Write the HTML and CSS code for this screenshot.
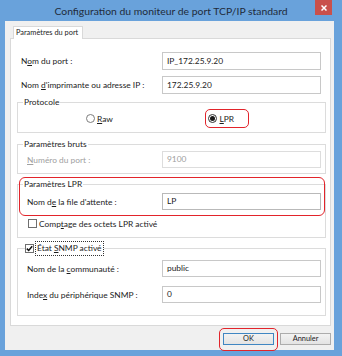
FILE: index.html
```html
<!DOCTYPE html>
<html lang="fr">
<head>
    <meta charset="UTF-8">
    <meta name="viewport" content="width=device-width, initial-scale=1.0">
    <title>Configuration du moniteur de port TCP/IP standard</title>
    <link rel="stylesheet" href="styles.css">
</head>
<body>
    <div class="fenetre">
        <div class="barre-titre">
            <span class="titre">Configuration du moniteur de port TCP/IP standard</span>
            <span class="fermer">
                <svg width="6" height="6" viewBox="0 0 6 6"><path d="M0.5 0.5 L5.5 5.5 M5.5 0.5 L0.5 5.5" stroke="#fff" stroke-width="1.5"/></svg>
            </span>
        </div>
        <div class="dialogue">
            <div class="onglets">
                <div class="onglet">Paramètres du port</div>
            </div>
            <div class="panneau">
                <div class="ligne haut premiere">
                    <span>N<u>o</u>m du port :</span>
                    <div class="champ grand">IP_172.25.9.20</div>
                </div>
                <div class="ligne haut">
                    <span>Nom <u>d</u>'imprimante ou adresse IP :</span>
                    <div class="champ grand">172.25.9.20</div>
                </div>

                <fieldset class="groupe protocole">
                    <legend>Protocole</legend>
                    <div class="radios">
                        <div class="choix">
                            <span class="radio"></span>
                            <span><u>R</u>aw</span>
                        </div>
                        <div class="choix marque">
                            <span class="radio coche"></span>
                            <span><u>L</u>PR</span>
                        </div>
                    </div>
                </fieldset>

                <fieldset class="groupe bruts">
                    <legend>Paramètres bruts</legend>
                    <div class="ligne inactif">
                        <span><u>N</u>uméro du port :</span>
                        <div class="champ">9100</div>
                    </div>
                </fieldset>

                <div class="bloc-lpr">
                    <fieldset class="groupe lpr">
                        <legend>Paramètres LPR</legend>
                        <div class="ligne file">
                            <span>Nom d<u>e</u> la file d'attente :</span>
                            <div class="champ fonce">LP</div>
                        </div>
                        <div class="case-ligne">
                            <span class="case"></span>
                            <span>Comp<u>t</u>age des octets LPR activé</span>
                        </div>
                    </fieldset>
                    <div class="surlignage"></div>
                </div>

                <fieldset class="groupe snmp">
                    <legend>
                        <span class="case cochee">
                            <svg width="7" height="7" viewBox="0 0 7 7"><path d="M0.8 3.6 L2.7 5.5 L6.2 1.2" fill="none" stroke="#111" stroke-width="1.5"/></svg>
                        </span>
                        <span class="focus">État <u>S</u>NMP activé</span>
                    </legend>
                    <div class="ligne communaute">
                        <span>Nom de la <u>c</u>ommunauté :</span>
                        <div class="champ">public</div>
                    </div>
                    <div class="ligne index">
                        <span>Inde<u>x</u> du périphérique SNMP :</span>
                        <div class="champ">0</div>
                    </div>
                </fieldset>
            </div>
            <div class="boutons">
                <div class="bouton-ok">
                    <button class="bouton defaut">OK</button>
                </div>
                <button class="bouton">Annuler</button>
            </div>
        </div>
    </div>
</body>
</html>
```
FILE: styles.css
```css
* {
    margin: 0;
    padding: 0;
    box-sizing: border-box;
}
body {
    width: 342px;
    height: 356px;
    font-family: Lato, "Noto Sans", sans-serif;
    font-size: 8.4px;
    color: #1c1c1c;
    overflow: hidden;
}
u {
    text-underline-offset: 1px;
}
.fenetre {
    width: 342px;
    height: 356px;
    background-color: #69a2db;
    display: flex;
    flex-direction: column;
    padding: 0 8px 6px 5px;
}
.barre-titre {
    position: relative;
    height: 21px;
    margin: 0 -8px 0 -5px;
    display: flex;
    align-items: center;
    justify-content: center;
    font-size: 10.4px;
    color: #1f2b3a;
}
.fermer {
    position: absolute;
    top: 0;
    right: 10px;
    width: 17px;
    height: 15px;
    background-color: #c9504b;
    display: flex;
    align-items: center;
    justify-content: center;
}
.dialogue {
    flex: 1;
    background-color: #f0f0f0;
    padding: 5px 3px 0 5px;
    display: flex;
    flex-direction: column;
}
.onglets {
    display: flex;
    height: 12px;
    padding-left: 3px;
}
.onglet {
    position: relative;
    z-index: 1;
    width: 70px;
    height: 13px;
    background-color: #fff;
    border: 1px solid #d9d9d9;
    border-bottom: none;
    font-size: 7.4px;
    line-height: 11px;
    padding-left: 2px;
}
.panneau {
    height: 288px;
    background-color: #fff;
    border: 1px solid #d9d9d9;
    padding: 0 4px 0 6px;
    display: flex;
    flex-direction: column;
}
.ligne {
    display: grid;
    grid-template-columns: 1fr 159px;
    align-items: center;
}
.ligne.haut {
    padding: 0 5px 0 4px;
    margin-top: 6px;
}
.ligne.haut.premiere {
    margin-top: 13px;
}
.champ {
    height: 17px;
    border: 1px solid #c8c8c8;
    background-color: #fff;
    padding-left: 4px;
    line-height: 15px;
}
.champ.grand {
    height: 18px;
    line-height: 16px;
}
.champ.fonce {
    border-color: #b9b9b9;
}
.inactif {
    color: #a0a0a0;
}
.inactif .champ {
    border-color: #dddddd;
}
.groupe {
    min-width: 0;
    border: 1px solid #dcdcdc;
    padding: 0 4px 0 9px;
}
.groupe legend {
    line-height: 12px;
    padding: 0 1px;
    margin-left: -4px;
}
.protocole {
    margin-top: 2px;
    padding-bottom: 4px;
}
.radios {
    display: grid;
    grid-template-columns: 119px 44px;
    height: 19px;
    margin-top: 1px;
    padding-left: 59px;
}
.choix {
    display: flex;
    align-items: center;
    gap: 2px;
}
.choix.marque {
    border: 1.5px solid #e2242b;
    border-radius: 5px;
    padding-left: 1.5px;
    gap: 3px;
}
.radio {
    width: 9px;
    height: 9px;
    border: 1px solid #7d7d7d;
    border-radius: 50%;
    background-color: #fff;
    display: flex;
    align-items: center;
    justify-content: center;
}
.radio.coche {
    border-color: #333;
}
.radio.coche::after {
    content: "";
    width: 5px;
    height: 5px;
    border-radius: 50%;
    background-color: #1a1a1a;
}
.bruts {
    margin-top: 5px;
    padding-bottom: 5px;
}
.bruts .ligne {
    margin-top: 1px;
}
.bloc-lpr {
    position: relative;
    margin-top: 4px;
}
.lpr {
    padding-bottom: 6px;
}
.ligne.file {
    margin-top: 3px;
}
.case-ligne {
    display: flex;
    align-items: center;
    gap: 2px;
    height: 15px;
    margin-top: 6px;
    padding-left: 1px;
}
.case {
    width: 9px;
    height: 9px;
    border: 1px solid #6f6f6f;
    background-color: #fff;
    display: flex;
    align-items: center;
    justify-content: center;
}
.surlignage {
    position: absolute;
    top: -1px;
    left: 2px;
    width: 306px;
    height: 39px;
    border: 1.5px solid #e2242b;
    border-radius: 6px;
    pointer-events: none;
}
.snmp {
    margin-top: 3px;
    padding-bottom: 12px;
}
.snmp legend {
    display: flex;
    align-items: center;
    gap: 1px;
    line-height: 13px;
    padding: 0;
    margin-left: -2px;
}
.focus {
    border: 1px dotted #333;
    padding: 0 1px;
}
.ligne.communaute {
    margin-top: 4px;
}
.ligne.index {
    margin-top: 9px;
}
.boutons {
    display: flex;
    justify-content: flex-end;
    gap: 6px;
    margin-top: 7px;
}
.bouton {
    width: 51px;
    height: 12px;
    border: 1px solid #acacac;
    background: linear-gradient(#f2f2f2, #e3e3e3);
    font-family: Lato, "Noto Sans", sans-serif;
    font-size: 7.4px;
    line-height: 10px;
    color: #1c1c1c;
}
.bouton.defaut {
    border-color: #3f86c2;
}
.bouton-ok {
    position: relative;
    display: flex;
}
.bouton-ok::after {
    content: "";
    position: absolute;
    top: -5px;
    right: -4px;
    bottom: -6px;
    left: -4px;
    border: 1.5px solid #e2242b;
    border-radius: 5px;
}
```
